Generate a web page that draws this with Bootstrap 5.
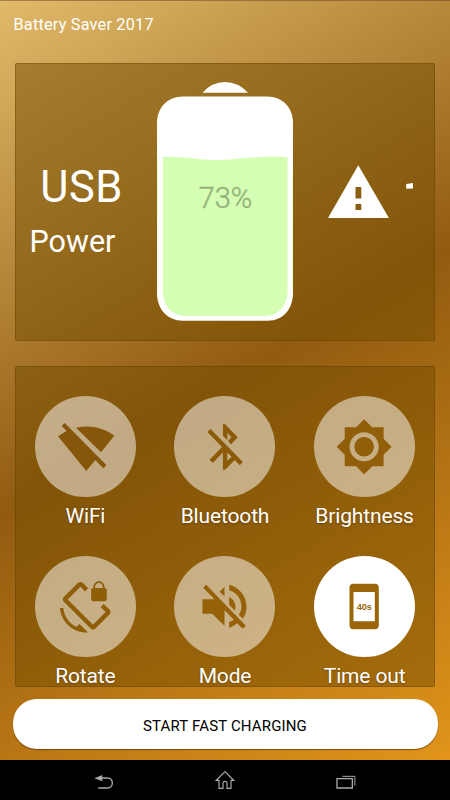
<!DOCTYPE html>
<html lang="en">
<head>
<meta charset="utf-8">
<meta name="viewport" content="width=device-width, initial-scale=1">
<title>Battery Saver 2017</title>
<link href="https://cdn.jsdelivr.net/npm/bootstrap@5.3.0/dist/css/bootstrap.min.css" rel="stylesheet">
<style>
  body { font-family: Roboto, "Noto Sans", sans-serif; width: 450px; height: 800px; background: #000; overflow: hidden; }
  .screen { height: 760px; background: linear-gradient(149.4deg, #e1ba6a 0%, #915b10 50%, #e2941a 100%); box-shadow: inset 0 1px 0 rgba(90,60,20,.45); }
  .app-title { height: 63px; padding: 14.5px 0 0 13.5px; font-size: 16.3px; line-height: 20px; letter-spacing: .2px; }
  .panel { margin: 0 15px; background: rgba(115,78,0,.5); border-radius: 2px; box-shadow: inset 0 0 0 1px rgba(80,50,0,.3); }
  .panel-status { height: 278px; }
  .panel-tools { height: 321px; margin-top: 25px; padding-top: 30px; }
  .side { width: 142px; }
  .source { margin-top: 99px; }
  .source-name { font-size: 43.5px; line-height: 52px; padding-right: 9px; letter-spacing: .5px; }
  .source-kind { font-size: 30.5px; line-height: 36px; padding-right: 27px; margin-top: 10px; }
  .battery { width: 136px; padding-top: 19px; }
  .percent { top: 117px; padding-left: 1px; font-size: 29px; line-height: 36px; font-weight: 300; color: #94b27c; -webkit-text-stroke: .4px #94b27c; }
  .warn { padding: 102px 0 0 34px; }
  .tool { height: 159.7px; }
  .tool-grid { margin-left: .6px; margin-right: .6px; }
  .disc { width: 101px; height: 101px; background: rgba(255,255,255,.5); }
  .disc-on { background: #fff; }
  .tool-label { font-size: 21px; line-height: 26px; margin-top: 6px; letter-spacing: -.15px; text-shadow: 0 1px 2px rgba(60,35,0,.45); }
  .charge { margin: 12px 12.5px 0; height: 49.5px; border: 0; border-radius: 24px; background: #fff; font-size: 15px; letter-spacing: .15px; box-shadow: 0 1px 1px rgba(80,45,0,.65); padding-top: 5px; }
  .sysbar { height: 40px; padding: 0 44px; }
  svg { display: block; }
</style>
<script src="https://cdn.jsdelivr.net/npm/bootstrap@5.3.0/dist/js/bootstrap.bundle.min.js"></script>
</head>
<body class="d-flex flex-column">
<main class="screen d-flex flex-column text-white">
  <header class="app-title">Battery Saver 2017</header>

  <section class="panel panel-status d-flex">
    <div class="side text-center">
      <div class="source">
        <div class="source-name">USB</div>
        <div class="source-kind">Power</div>
      </div>
    </div>
    <div class="battery position-relative">
      <svg width="136" height="239" viewBox="157 82 136 239">
        <path fill="#fff" d="M202.500 92.700Q212 82 225 82T248 92.700Z"/>
        <path fill="#fff" d="M183 96.500H267C283 96.500 293 108 293 123V293C293 309 283 320.700 268 320.700H183C167 320.700 157 309 157 293V123C157 108 167 96.500 183 96.500Z"/>
        <path fill="#d5ffb2" d="M163 157C184 156 195 160 216 160C238 160 250 155.500 287.500 157V292C287.500 305 278 316 265 316H186C172 316 163 305 163 292Z"/>
        <path fill="none" stroke="#d5ffb2" stroke-width=".8" d="M157.300 157V221M292.700 170V292"/>
      </svg>
      <div class="percent position-absolute start-0 w-100 text-center">73%</div>
    </div>
    <div class="side warn">
      <svg width="90" height="56" viewBox="327 165 90 56">
        <path fill="#fff" fill-rule="evenodd" d="M358.300 165.200L388.900 218H328ZM355.500 187V198.500H361.300V187ZM355.500 204V210H361.300V204Z"/>
        <path fill="#fff" d="M406.200 184L413 183V188.600L406.200 188.800Z"/>
      </svg>
    </div>
  </section>

  <section class="panel panel-tools">
    <div class="row g-0 text-center tool-grid">
      <div class="col-4 tool">
        <div class="disc rounded-circle mx-auto">
          <svg width="101" height="101" fill="#86570a"><path d="M29.700 27L71.300 69L68.300 72.300L60.300 64L51.300 75L23 40.300L31.500 35L26.700 29.700Z"/><path d="M41 31.800C54 29 67 31 79.300 39.700L66 56.300Z"/></svg>
        </div>
        <div class="tool-label">WiFi</div>
      </div>
      <div class="col-4 tool">
        <div class="disc rounded-circle mx-auto">
          <svg width="101" height="101" fill="#8b5b08"><path transform="translate(24.500 23.800) scale(2.220 2.270)" d="M13 5.830l1.880 1.880-1.600 1.600 1.410 1.410 3.020-3.020L12 2h-1v5.030l2 2v-3.200zM5.410 4L4 5.410 10.590 12 5 17.590 6.410 19 11 14.410V22h1l4.290-4.290 2.300 2.290L20 18.590 5.410 4zM13 18.170v-3.760l1.880 1.880L13 18.170z"/></svg>
        </div>
        <div class="tool-label">Bluetooth</div>
      </div>
      <div class="col-4 tool">
        <div class="disc rounded-circle mx-auto">
          <svg width="101" height="101" fill="#915f09"><path transform="translate(21 21.600) scale(2.430)" d="M20 8.690V4h-4.690L12 .690 8.690 4H4v4.690L.690 12 4 15.310V20h4.690L12 23.310 15.310 20H20v-4.690L23.310 12 20 8.690zM12 18c-3.310 0-6-2.690-6-6s2.690-6 6-6 6 2.690 6 6-2.690 6-6 6zm0-10c-2.210 0-4 1.790-4 4s1.790 4 4 4 4-1.790 4-4-1.790-4-4-4z"/></svg>
        </div>
        <div class="tool-label">Brightness</div>
      </div>
      <div class="col-4 tool">
        <div class="disc rounded-circle mx-auto">
          <svg width="101" height="101" fill="#8f5e09"><path transform="translate(22.700 25.200) scale(2.230)" d="M23.250 12.770l-2.570-2.570-1.410 1.410 2.220 2.220-5.660 5.660L4.510 8.170l5.660-5.660 2.100 2.100 1.410-1.410L11.230.750c-.590-.590-1.540-.590-2.120 0L2.750 7.110c-.590.590-.590 1.540 0 2.120l12.020 12.020c.590.590 1.540.590 2.120 0l6.360-6.360c.590-.590.590-1.540 0-2.120zM8.470 20.480C5.200 18.940 2.860 15.760 2.500 12H1c.510 6.160 5.660 11 11.950 11l.660-.030-3.810-3.820-1.330 1.330zM16 9h5c.550 0 1-.450 1-1V4c0-.550-.450-1-1-1v-.500C21 1.120 19.880 0 18.500 0S16 1.120 16 2.500V3c-.550 0-1 .450-1 1v4c0 .550.450 1 1 1zm.800-6.500c0-.940.760-1.700 1.700-1.700s1.700.760 1.700 1.700V3h-3.400v-.500z"/></svg>
        </div>
        <div class="tool-label">Rotate</div>
      </div>
      <div class="col-4 tool">
        <div class="disc rounded-circle mx-auto">
          <svg width="101" height="101" fill="#956209"><g transform="translate(-9.500 -5.700) scale(.3333)"><path d="M125 103L244 226L235 235L218 219Q207 228 194 233V215Q202 212 208 208L180 180V226L143 190H114V147H150L116 112Z"/><path d="M180 109V138L165 124Z"/><path d="M194 103C226 111 246 138 246 170Q246 190 235 205L223 193Q231 183 231 170C231 145 216 126 194 120Z"/><path d="M194 139Q212 149 213 170L211 181L194 163Z"/></g></svg>
        </div>
        <div class="tool-label">Mode</div>
      </div>
      <div class="col-4 tool">
        <div class="disc disc-on rounded-circle mx-auto">
          <svg width="101" height="101" fill="#9b660a"><path fill-rule="evenodd" d="M39.500 27.700H60.800Q64.800 27.700 64.800 31.700V69.300Q64.800 73.300 60.800 73.300H39.500Q35.500 73.300 35.500 69.300V31.700Q35.500 27.700 39.500 27.700ZM39.500 36V65.300H60.800V36Z"/><text x="50.300" y="54" text-anchor="middle" font-family="Liberation Sans, sans-serif" font-weight="700" font-size="9.200">40s</text></svg>
        </div>
        <div class="tool-label">Time out</div>
      </div>
    </div>
  </section>

  <button class="charge text-black" type="button">START FAST CHARGING</button>
</main>

<nav class="sysbar bg-black">
  <div class="row g-0 h-100 align-items-center">
    <div class="col-4"><svg class="mx-auto" width="20" height="40" viewBox="284 210 60 120"><path fill="#aaa" d="M285 265L309 255V274Z"/><path fill="none" stroke="#aaa" stroke-width="4" d="M308 264H324C344 264 344 294 324 294H297"/></svg></div>
    <div class="col-4"><svg class="mx-auto" width="20" height="40" viewBox="645 210 60 120"><path fill="none" stroke="#aaa" stroke-width="3.500" d="M675 245L649 271H657V295H669V278Q669 274 675 274T681 278V295H693V271H701Z"/></svg></div>
    <div class="col-4"><svg class="mx-auto" width="20" height="40" viewBox="1007 210 60 120"><path fill="none" stroke="#aaa" stroke-width="4" d="M1010 266H1056V294H1010Z"/><path fill="none" stroke="#aaa" stroke-width="3" d="M1026 259H1063.500V287"/></svg></div>
  </div>
</nav>
</body>
</html>
